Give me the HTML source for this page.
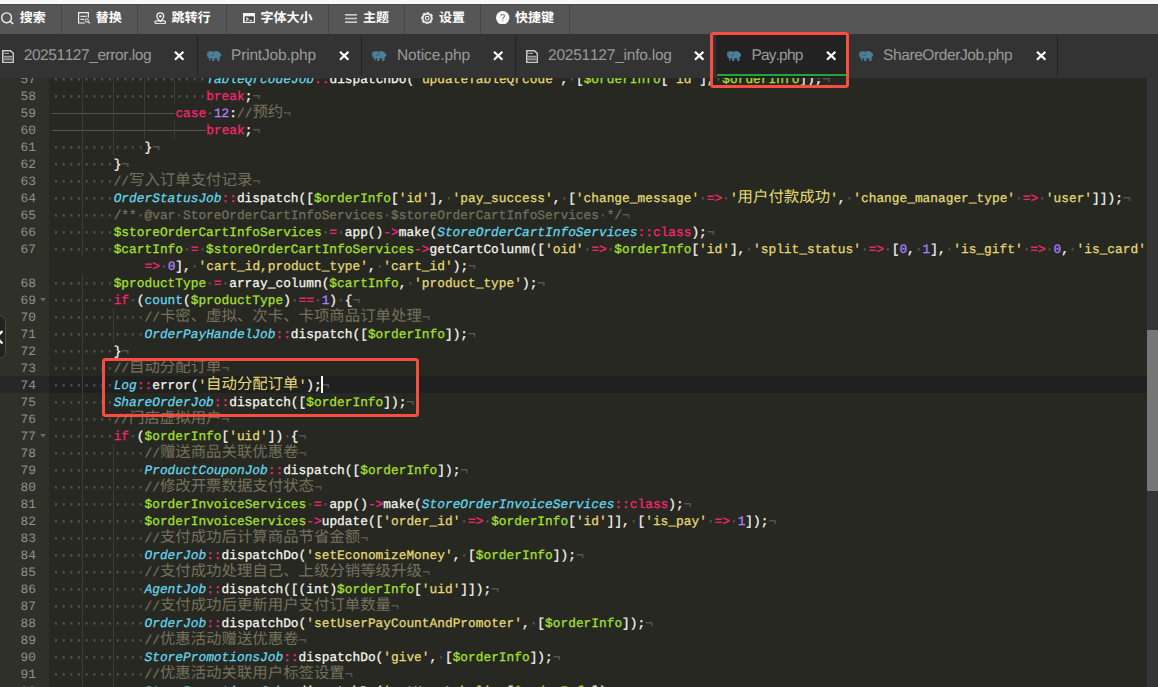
<!DOCTYPE html><html><head><meta charset="utf-8"><title>editor</title><style>
*{box-sizing:border-box}
html,body{margin:0;padding:0}
body{width:1158px;height:687px;overflow:hidden;background:#272822;position:relative;font-family:"Liberation Sans",sans-serif;text-rendering:geometricPrecision}
#top{position:absolute;left:0;top:0;width:1158px;height:4px;background:#f8f8f8}
#tb{position:absolute;left:0;top:4px;width:1158px;height:30px;background:#565656;border-top:1px solid #4c4c4c;overflow:hidden}
#tb svg{margin-top:-1px}
.tl{position:absolute;top:5.1px;height:16px;font:700 13px/16px "Liberation Sans","Noto Sans CJK SC",sans-serif;color:#fff;white-space:nowrap}
.sp{position:absolute;top:-1px;width:1px;height:30px;background:#454545}
#tabs{position:absolute;left:0;top:34px;width:1158px;height:44px;background:#333;overflow:hidden}
.ts{position:absolute;top:2px;width:1px;height:40px;background:#222}
.tt{position:absolute;top:11.6px;font-size:15.5px;line-height:20px;color:#9a9a9a;white-space:pre}
.tt b{display:inline-block;font-weight:400}
#ed{position:absolute;left:0;top:78px;width:1158px;height:609px;overflow:hidden;background:#272822}
#gut{position:absolute;left:0;top:0;width:49px;height:610px;background:#2F3129}
.ln{position:absolute;left:0;width:36px;white-space:pre;height:17px;text-align:right;font:12.85px/17px "Liberation Mono",monospace;color:#8F908A}
.row{position:absolute;left:52px;height:17px;white-space:pre;font:12.85px/17px "Liberation Mono",monospace;color:#F8F8F2;-webkit-text-stroke:0.25px}
.row b,.ln b{display:inline-block;width:7.7125px;font-weight:400;font-style:inherit}
.iv{color:#5a5a54;-webkit-text-stroke:0.3px}
.cm{color:#75715E}.st{color:#E6DB74}.va{color:#A6E22E}.cl{color:#66D9EF}.kw{color:#F92672}.nu{color:#AE81FF}.tx{color:#F8F8F2}.it{font-style:italic}
.ig{display:inline-block;width:30.85px;height:17px;vertical-align:top;background:linear-gradient(#3c3d37,#3c3d37) right top/1px 100% no-repeat;margin-top:-1px;padding-top:1px}
.tb{background:linear-gradient(#3c3d37,#3c3d37) right top/1px 100% no-repeat,linear-gradient(#55554f,#55554f) left 9px/100% 1px no-repeat}
.tb0{display:inline-block;width:30.85px;height:17px;vertical-align:top;margin-top:-1px;background:linear-gradient(#55554f,#55554f) left 9px/100% 1px no-repeat}
.cj{display:inline-block;vertical-align:top}
.cjt{height:17px;font:15.425px/17px "Liberation Mono","Noto Sans CJK SC",monospace;white-space:nowrap;-webkit-text-stroke:0;overflow:visible}
#pill{position:absolute;left:-9px;top:315px;width:15px;height:44px;border-radius:7px;background:#222;border:1px solid #4c4c4a}
.rb{position:absolute;border:3px solid #FA4C3F;border-radius:3.5px}
</style></head><body><div id="top"></div><div id="tb"><i class="sp" style="left:61px"></i><svg style="position:absolute;left:1.2px;top:7.8px" width="13" height="13" viewBox="0 0 13 13"><circle cx="5.6" cy="5.8" r="4.9" fill="none" stroke="#f0f0f0" stroke-width="1.4"/><path d="M9.1 9.3 L12.4 12" stroke="#f0f0f0" stroke-width="1.5" fill="none"/></svg><span class="tl" style="left:19.7px;width:26px">搜索</span><i class="sp" style="left:137px"></i><svg style="position:absolute;left:77.6px;top:8.3px" width="13" height="12" viewBox="0 0 13 12"><path d="M10.3 5.8V0.6H0.6V11.0H6.8" fill="none" stroke="#f0f0f0" stroke-width="1.2"/><path d="M2.4 4.3H8.6M2.4 7.4H6.4" stroke="#ddd" stroke-width="1.2"/><circle cx="8.8" cy="8.4" r="1.6" fill="none" stroke="#f0f0f0" stroke-width="1"/><path d="M10 9.7L12 11.3" stroke="#f0f0f0" stroke-width="1.1"/></svg><span class="tl" style="left:95.75px;width:26px">替换</span><i class="sp" style="left:226px"></i><svg style="position:absolute;left:153.8px;top:7.8px" width="12.6" height="12.6" viewBox="0 0 12.6 12.6"><ellipse cx="6.3" cy="10.3" rx="5.5" ry="1.55" fill="none" stroke="#f2f2f2" stroke-width="1.25"/><path d="M6.3 9.5C4.4 7.5 2.9 5.9 2.9 4.2A3.4 3.4 0 0 1 9.7 4.2C9.7 5.9 8.2 7.5 6.3 9.5Z" fill="#565656" stroke="#f2f2f2" stroke-width="1.3"/><circle cx="6.3" cy="4.2" r="1.2" fill="#f2f2f2"/></svg><span class="tl" style="left:171.6px;width:39px">跳转行</span><i class="sp" style="left:328px"></i><svg style="position:absolute;left:242.85px;top:8.95px" width="12.4" height="10.2" viewBox="0 0 12.4 10.2"><rect x="0" y="0" width="12.4" height="10.2" fill="#f4f4f4"/><rect x="1.6" y="3.3" width="9.2" height="5.5" fill="#444"/><path d="M2.9 4.6L5.2 6.1L2.9 7.7" fill="none" stroke="#f4f4f4" stroke-width="1.1"/><path d="M6.3 7.4H9.2" stroke="#f4f4f4" stroke-width="0.9"/></svg><span class="tl" style="left:260.5px;width:52px">字体大小</span><i class="sp" style="left:404px"></i><svg style="position:absolute;left:344.9px;top:9.6px" width="12" height="9" viewBox="0 0 12 9"><path d="M0 0.9H12M0 8.1H12" stroke="#f0f0f0" stroke-width="1.2"/><path d="M0 4.5H12" stroke="#c8c8c8" stroke-width="1.6"/></svg><span class="tl" style="left:363px;width:26px">主题</span><i class="sp" style="left:480px"></i><svg style="position:absolute;left:420.8px;top:7.7px" width="12.4" height="12.4" viewBox="0 0 12.4 12.4"><circle cx="6.2" cy="6.2" r="4.5" fill="none" stroke="#e4e4e4" stroke-width="2"/><circle cx="6.2" cy="6.2" r="5.6" fill="none" stroke="#e4e4e4" stroke-width="1.2" stroke-dasharray="2.4 2" stroke-dashoffset="1.2"/><circle cx="6.2" cy="6.2" r="1.8" fill="none" stroke="#f4f4f4" stroke-width="1.1"/></svg><span class="tl" style="left:438.9px;width:26px">设置</span><i class="sp" style="left:569px"></i><svg style="position:absolute;left:496.3px;top:7.1px" width="13.4" height="13.4" viewBox="0 0 13.4 13.4"><circle cx="6.7" cy="6.7" r="6.7" fill="#fafafa"/><path d="M4.9 5.3C4.9 4.1 5.7 3.5 6.7 3.5S8.5 4.1 8.5 5C8.5 6.2 6.8 6.5 6.8 8" fill="none" stroke="#777" stroke-width="1.05"/><circle cx="6.8" cy="9.3" r="0.65" fill="#777"/></svg><span class="tl" style="left:515px;width:39px">快捷键</span></div><div id="tabs"><i class="ts" style="left:197px"></i><svg style="position:absolute;left:1.6px;top:15.6px" width="12.2" height="13.4" viewBox="0 0 12.2 13.4"><path d="M0.8 0.8H8.5L11.4 3.5V12.6H0.8Z" fill="#262626" stroke="#cbcbcb" stroke-width="1.6"/><path d="M2.3 3.4H7.2" stroke="#a8a8a8" stroke-width="1.3"/><path d="M2 6.3H10.3M2 8.05H10.3M2 9.85H10.3" stroke="#dedede" stroke-width="0.85"/></svg><span class="tt" style="left:23.7px"><b style="width:8.19px">2</b><b style="width:8.19px">0</b><b style="width:8.19px">2</b><b style="width:8.19px">5</b><b style="width:8.19px">1</b><b style="width:8.19px">1</b><b style="width:8.19px">2</b><b style="width:8.19px">7</b><b style="width:8.19px">_</b><b style="width:8.19px">e</b><b style="width:4.73px">r</b><b style="width:4.73px">r</b><b style="width:8.19px">o</b><b style="width:4.73px">r</b><b style="width:3.88px">.</b><b style="width:3.01px">l</b><b style="width:8.19px">o</b><b style="width:8.19px">g</b></span><svg style="position:absolute;left:174.4px;top:17.3px" width="10.4" height="9.6" viewBox="0 0 10.4 9.6"><path d="M1 0.8L9.4 8.8M9.4 0.8L1 8.8" stroke="#fff" stroke-width="2.2"/></svg><i class="ts" style="left:361px"></i><svg style="position:absolute;left:207.2px;top:16.8px" width="14.5" height="10.3" viewBox="0 0 14.5 10.3"><path fill="#4B8098" d="M0.9 0.9C1.6 0.3 2.7 0.1 3.8 0.15C5 0.2 6 0.4 6.8 0.8C7.5 0.3 8.3 0.1 9.1 0.1C10.3 0.1 11.4 0.5 12.2 1.2C13 1.8 13.6 2.5 13.95 3.3L14.5 4.4L14.1 4.9C13.8 5.2 13.4 5.5 13.1 5.8C12.8 6.2 12.6 6.7 12.5 7.2L12.4 10.2H10.2V7.5C9.3 7.4 8.3 7.3 7.35 7.2V10.2H5.25L5.05 7.2H3.5V9.4H2.3L2.1 7.2L0.9 6.5C0.4 5.9 0.15 5.1 0.15 4.4V2.3C0.2 1.7 0.5 1.2 0.9 0.9Z"/><path d="M6.8 0.8C6.9 2 6.8 3.4 6.3 4.4C5.5 4.6 4.6 4.6 3.8 4.5" fill="none" stroke="#2b4a5a" stroke-width="0.5"/><circle cx="1.8" cy="3.6" r="0.45" fill="#2b3a44"/><circle cx="1.8" cy="5.6" r="0.45" fill="#2b3a44"/></svg><span class="tt" style="left:231px"><b style="width:10.17px">P</b><b style="width:4.99px">r</b><b style="width:3.27px">i</b><b style="width:8.45px">n</b><b style="width:4.14px">t</b><b style="width:7.58px">J</b><b style="width:8.45px">o</b><b style="width:8.45px">b</b><b style="width:4.14px">.</b><b style="width:8.45px">p</b><b style="width:8.45px">h</b><b style="width:8.45px">p</b></span><svg style="position:absolute;left:338.6px;top:17.3px" width="10.4" height="9.6" viewBox="0 0 10.4 9.6"><path d="M1 0.8L9.4 8.8M9.4 0.8L1 8.8" stroke="#fff" stroke-width="2.2"/></svg><i class="ts" style="left:515px"></i><svg style="position:absolute;left:372.1px;top:16.8px" width="14.5" height="10.3" viewBox="0 0 14.5 10.3"><path fill="#4B8098" d="M0.9 0.9C1.6 0.3 2.7 0.1 3.8 0.15C5 0.2 6 0.4 6.8 0.8C7.5 0.3 8.3 0.1 9.1 0.1C10.3 0.1 11.4 0.5 12.2 1.2C13 1.8 13.6 2.5 13.95 3.3L14.5 4.4L14.1 4.9C13.8 5.2 13.4 5.5 13.1 5.8C12.8 6.2 12.6 6.7 12.5 7.2L12.4 10.2H10.2V7.5C9.3 7.4 8.3 7.3 7.35 7.2V10.2H5.25L5.05 7.2H3.5V9.4H2.3L2.1 7.2L0.9 6.5C0.4 5.9 0.15 5.1 0.15 4.4V2.3C0.2 1.7 0.5 1.2 0.9 0.9Z"/><path d="M6.8 0.8C6.9 2 6.8 3.4 6.3 4.4C5.5 4.6 4.6 4.6 3.8 4.5" fill="none" stroke="#2b4a5a" stroke-width="0.5"/><circle cx="1.8" cy="3.6" r="0.45" fill="#2b3a44"/><circle cx="1.8" cy="5.6" r="0.45" fill="#2b3a44"/></svg><span class="tt" style="left:397px"><b style="width:11.08px">N</b><b style="width:8.51px">o</b><b style="width:4.20px">t</b><b style="width:3.33px">i</b><b style="width:7.64px">c</b><b style="width:8.51px">e</b><b style="width:4.20px">.</b><b style="width:8.51px">p</b><b style="width:8.51px">h</b><b style="width:8.51px">p</b></span><svg style="position:absolute;left:493.4px;top:17.3px" width="10.4" height="9.6" viewBox="0 0 10.4 9.6"><path d="M1 0.8L9.4 8.8M9.4 0.8L1 8.8" stroke="#fff" stroke-width="2.2"/></svg><i class="ts" style="left:716px"></i><svg style="position:absolute;left:525.95px;top:15.6px" width="12.2" height="13.4" viewBox="0 0 12.2 13.4"><path d="M0.8 0.8H8.5L11.4 3.5V12.6H0.8Z" fill="#262626" stroke="#cbcbcb" stroke-width="1.6"/><path d="M2.3 3.4H7.2" stroke="#a8a8a8" stroke-width="1.3"/><path d="M2 6.3H10.3M2 8.05H10.3M2 9.85H10.3" stroke="#dedede" stroke-width="0.85"/></svg><span class="tt" style="left:548px"><b style="width:8.40px">2</b><b style="width:8.40px">0</b><b style="width:8.40px">2</b><b style="width:8.40px">5</b><b style="width:8.40px">1</b><b style="width:8.40px">1</b><b style="width:8.40px">2</b><b style="width:8.40px">7</b><b style="width:8.40px">_</b><b style="width:3.22px">i</b><b style="width:8.40px">n</b><b style="width:4.09px">f</b><b style="width:8.40px">o</b><b style="width:4.09px">.</b><b style="width:3.22px">l</b><b style="width:8.40px">o</b><b style="width:8.40px">g</b></span><svg style="position:absolute;left:693.6px;top:17.3px" width="10.4" height="9.6" viewBox="0 0 10.4 9.6"><path d="M1 0.8L9.4 8.8M9.4 0.8L1 8.8" stroke="#fff" stroke-width="2.2"/></svg><div style="position:absolute;left:717px;top:0;width:131px;height:44px;background:#222"></div><div style="position:absolute;left:717px;top:40px;width:131px;height:2px;background:#20A53A"></div><i class="ts" style="left:848px"></i><svg style="position:absolute;left:726.7px;top:16.8px" width="14.5" height="10.3" viewBox="0 0 14.5 10.3"><path fill="#4B8098" d="M0.9 0.9C1.6 0.3 2.7 0.1 3.8 0.15C5 0.2 6 0.4 6.8 0.8C7.5 0.3 8.3 0.1 9.1 0.1C10.3 0.1 11.4 0.5 12.2 1.2C13 1.8 13.6 2.5 13.95 3.3L14.5 4.4L14.1 4.9C13.8 5.2 13.4 5.5 13.1 5.8C12.8 6.2 12.6 6.7 12.5 7.2L12.4 10.2H10.2V7.5C9.3 7.4 8.3 7.3 7.35 7.2V10.2H5.25L5.05 7.2H3.5V9.4H2.3L2.1 7.2L0.9 6.5C0.4 5.9 0.15 5.1 0.15 4.4V2.3C0.2 1.7 0.5 1.2 0.9 0.9Z"/><path d="M6.8 0.8C6.9 2 6.8 3.4 6.3 4.4C5.5 4.6 4.6 4.6 3.8 4.5" fill="none" stroke="#2b4a5a" stroke-width="0.5"/><circle cx="1.8" cy="3.6" r="0.45" fill="#2b3a44"/><circle cx="1.8" cy="5.6" r="0.45" fill="#2b3a44"/></svg><span class="tt" style="left:751.4px"><b style="width:9.52px">P</b><b style="width:7.80px">a</b><b style="width:6.93px">y</b><b style="width:3.49px">.</b><b style="width:7.80px">p</b><b style="width:7.80px">h</b><b style="width:7.80px">p</b></span><svg style="position:absolute;left:826px;top:17.3px" width="10.4" height="9.6" viewBox="0 0 10.4 9.6"><path d="M1 0.8L9.4 8.8M9.4 0.8L1 8.8" stroke="#fff" stroke-width="2.2"/></svg><i class="ts" style="left:1057px"></i><svg style="position:absolute;left:858.7px;top:16.8px" width="14.5" height="10.3" viewBox="0 0 14.5 10.3"><path fill="#4B8098" d="M0.9 0.9C1.6 0.3 2.7 0.1 3.8 0.15C5 0.2 6 0.4 6.8 0.8C7.5 0.3 8.3 0.1 9.1 0.1C10.3 0.1 11.4 0.5 12.2 1.2C13 1.8 13.6 2.5 13.95 3.3L14.5 4.4L14.1 4.9C13.8 5.2 13.4 5.5 13.1 5.8C12.8 6.2 12.6 6.7 12.5 7.2L12.4 10.2H10.2V7.5C9.3 7.4 8.3 7.3 7.35 7.2V10.2H5.25L5.05 7.2H3.5V9.4H2.3L2.1 7.2L0.9 6.5C0.4 5.9 0.15 5.1 0.15 4.4V2.3C0.2 1.7 0.5 1.2 0.9 0.9Z"/><path d="M6.8 0.8C6.9 2 6.8 3.4 6.3 4.4C5.5 4.6 4.6 4.6 3.8 4.5" fill="none" stroke="#2b4a5a" stroke-width="0.5"/><circle cx="1.8" cy="3.6" r="0.45" fill="#2b3a44"/><circle cx="1.8" cy="5.6" r="0.45" fill="#2b3a44"/></svg><span class="tt" style="left:883px"><b style="width:9.94px">S</b><b style="width:8.22px">h</b><b style="width:8.22px">a</b><b style="width:4.76px">r</b><b style="width:8.22px">e</b><b style="width:11.66px">O</b><b style="width:4.76px">r</b><b style="width:8.22px">d</b><b style="width:8.22px">e</b><b style="width:4.76px">r</b><b style="width:7.35px">J</b><b style="width:8.22px">o</b><b style="width:8.22px">b</b><b style="width:3.91px">.</b><b style="width:8.22px">p</b><b style="width:8.22px">h</b><b style="width:8.22px">p</b></span><svg style="position:absolute;left:1035.5px;top:17.3px" width="10.4" height="9.6" viewBox="0 0 10.4 9.6"><path d="M1 0.8L9.4 8.8M9.4 0.8L1 8.8" stroke="#fff" stroke-width="2.2"/></svg></div><div id="ed"><div id="gut"></div><div style="position:absolute;left:49px;top:298px;width:1098px;height:17px;background:#202020"></div><div style="position:absolute;left:0;top:298px;width:49px;height:17px;background:#272727"></div><div class="ln" style="top:-7px"><b>5</b><b>7</b></div><div class="row" style="top:-7px"><span class="ig iv"><b>·</b><b>·</b><b>·</b><b>·</b></span><span class="ig iv"><b>·</b><b>·</b><b>·</b><b>·</b></span><span class="ig iv"><b>·</b><b>·</b><b>·</b><b>·</b></span><span class="ig iv"><b>·</b><b>·</b><b>·</b><b>·</b></span><span class="iv"><b>·</b><b>·</b><b>·</b><b>·</b></span><span class="cl it"><b>T</b><b>a</b><b>b</b><b>l</b><b>e</b><b>Q</b><b>r</b><b>c</b><b>o</b><b>d</b><b>e</b><b>J</b><b>o</b><b>b</b></span><span class="kw"><b>:</b><b>:</b></span><span class="tx"><b>d</b><b>i</b><b>s</b><b>p</b><b>a</b><b>t</b><b>c</b><b>h</b><b>D</b><b>o</b></span><span class="tx"><b>(</b></span><span class="st"><b>&#x27;</b><b>u</b><b>p</b><b>d</b><b>a</b><b>t</b><b>e</b><b>T</b><b>a</b><b>b</b><b>l</b><b>e</b><b>Q</b><b>r</b><b>c</b><b>o</b><b>d</b><b>e</b><b>&#x27;</b></span><span class="tx"><b>,</b></span><span class="iv"><b>·</b></span><span class="tx"><b>[</b></span><span class="va"><b>$</b><b>o</b><b>r</b><b>d</b><b>e</b><b>r</b><b>I</b><b>n</b><b>f</b><b>o</b></span><span class="tx"><b>[</b></span><span class="st"><b>&#x27;</b><b>i</b><b>d</b><b>&#x27;</b></span><span class="tx"><b>]</b></span><span class="tx"><b>,</b></span><span class="iv"><b>·</b></span><span class="va"><b>$</b><b>o</b><b>r</b><b>d</b><b>e</b><b>r</b><b>I</b><b>n</b><b>f</b><b>o</b></span><span class="tx"><b>]</b></span><span class="tx"><b>)</b></span><span class="tx"><b>;</b></span><span class="iv"><b>¬</b></span></div><div class="ln" style="top:10px"><b>5</b><b>8</b></div><div class="row" style="top:10px"><span class="ig iv"><b>·</b><b>·</b><b>·</b><b>·</b></span><span class="ig iv"><b>·</b><b>·</b><b>·</b><b>·</b></span><span class="ig iv"><b>·</b><b>·</b><b>·</b><b>·</b></span><span class="ig iv"><b>·</b><b>·</b><b>·</b><b>·</b></span><span class="iv"><b>·</b><b>·</b><b>·</b><b>·</b></span><span class="kw"><b>b</b><b>r</b><b>e</b><b>a</b><b>k</b></span><span class="tx"><b>;</b></span><span class="iv"><b>¬</b></span></div><div class="ln" style="top:27px"><b>5</b><b>9</b></div><div class="row" style="top:27px"><span class="ig tb"></span><span class="ig tb"></span><span class="ig tb"></span><span class="tb0"></span><span class="kw"><b>c</b><b>a</b><b>s</b><b>e</b></span><span class="iv"><b>·</b></span><span class="nu"><b>1</b><b>2</b></span><span class="tx"><b>:</b></span><span class="cm"><b>/</b><b>/</b></span><span class="cj cjt cm" style="width:30.85px">预约</span><span class="iv"><b>¬</b></span></div><div class="ln" style="top:44px"><b>6</b><b>0</b></div><div class="row" style="top:44px"><span class="ig tb"></span><span class="ig tb"></span><span class="ig tb"></span><span class="ig tb"></span><span class="tb0"></span><span class="kw"><b>b</b><b>r</b><b>e</b><b>a</b><b>k</b></span><span class="tx"><b>;</b></span><span class="iv"><b>¬</b></span></div><div class="ln" style="top:61px"><b>6</b><b>1</b></div><div class="row" style="top:61px"><span class="ig iv"><b>·</b><b>·</b><b>·</b><b>·</b></span><span class="ig iv"><b>·</b><b>·</b><b>·</b><b>·</b></span><span class="iv"><b>·</b><b>·</b><b>·</b><b>·</b></span><span class="tx"><b>}</b></span><span class="iv"><b>¬</b></span></div><div class="ln" style="top:78px"><b>6</b><b>2</b></div><div class="row" style="top:78px"><span class="ig iv"><b>·</b><b>·</b><b>·</b><b>·</b></span><span class="iv"><b>·</b><b>·</b><b>·</b><b>·</b></span><span class="tx"><b>}</b></span><span class="iv"><b>¬</b></span></div><div class="ln" style="top:95px"><b>6</b><b>3</b></div><div class="row" style="top:95px"><span class="ig iv"><b>·</b><b>·</b><b>·</b><b>·</b></span><span class="iv"><b>·</b><b>·</b><b>·</b><b>·</b></span><span class="cm"><b>/</b><b>/</b></span><span class="cj cjt cm" style="width:123.40px">写入订单支付记录</span><span class="iv"><b>¬</b></span></div><div class="ln" style="top:112px"><b>6</b><b>4</b></div><div class="row" style="top:112px"><span class="ig iv"><b>·</b><b>·</b><b>·</b><b>·</b></span><span class="iv"><b>·</b><b>·</b><b>·</b><b>·</b></span><span class="cl it"><b>O</b><b>r</b><b>d</b><b>e</b><b>r</b><b>S</b><b>t</b><b>a</b><b>t</b><b>u</b><b>s</b><b>J</b><b>o</b><b>b</b></span><span class="kw"><b>:</b><b>:</b></span><span class="tx"><b>d</b><b>i</b><b>s</b><b>p</b><b>a</b><b>t</b><b>c</b><b>h</b></span><span class="tx"><b>(</b></span><span class="tx"><b>[</b></span><span class="va"><b>$</b><b>o</b><b>r</b><b>d</b><b>e</b><b>r</b><b>I</b><b>n</b><b>f</b><b>o</b></span><span class="tx"><b>[</b></span><span class="st"><b>&#x27;</b><b>i</b><b>d</b><b>&#x27;</b></span><span class="tx"><b>]</b></span><span class="tx"><b>,</b></span><span class="iv"><b>·</b></span><span class="st"><b>&#x27;</b><b>p</b><b>a</b><b>y</b><b>_</b><b>s</b><b>u</b><b>c</b><b>c</b><b>e</b><b>s</b><b>s</b><b>&#x27;</b></span><span class="tx"><b>,</b></span><span class="iv"><b>·</b></span><span class="tx"><b>[</b></span><span class="st"><b>&#x27;</b><b>c</b><b>h</b><b>a</b><b>n</b><b>g</b><b>e</b><b>_</b><b>m</b><b>e</b><b>s</b><b>s</b><b>a</b><b>g</b><b>e</b><b>&#x27;</b></span><span class="iv"><b>·</b></span><span class="kw"><b>=</b><b>&gt;</b></span><span class="iv"><b>·</b></span><span class="st"><b>&#x27;</b></span><span class="cj cjt st" style="width:92.55px">用户付款成功</span><span class="st"><b>&#x27;</b></span><span class="tx"><b>,</b></span><span class="iv"><b>·</b></span><span class="st"><b>&#x27;</b><b>c</b><b>h</b><b>a</b><b>n</b><b>g</b><b>e</b><b>_</b><b>m</b><b>a</b><b>n</b><b>a</b><b>g</b><b>e</b><b>r</b><b>_</b><b>t</b><b>y</b><b>p</b><b>e</b><b>&#x27;</b></span><span class="iv"><b>·</b></span><span class="kw"><b>=</b><b>&gt;</b></span><span class="iv"><b>·</b></span><span class="st"><b>&#x27;</b><b>u</b><b>s</b><b>e</b><b>r</b><b>&#x27;</b></span><span class="tx"><b>]</b></span><span class="tx"><b>]</b></span><span class="tx"><b>)</b></span><span class="tx"><b>;</b></span><span class="iv"><b>¬</b></span></div><div class="ln" style="top:129px"><b>6</b><b>5</b></div><div class="row" style="top:129px"><span class="ig iv"><b>·</b><b>·</b><b>·</b><b>·</b></span><span class="iv"><b>·</b><b>·</b><b>·</b><b>·</b></span><span class="cm"><b>/</b><b>*</b><b>*</b></span><span class="iv"><b>·</b></span><span class="cm"><b>@</b><b>v</b><b>a</b><b>r</b></span><span class="iv"><b>·</b></span><span class="cm"><b>S</b><b>t</b><b>o</b><b>r</b><b>e</b><b>O</b><b>r</b><b>d</b><b>e</b><b>r</b><b>C</b><b>a</b><b>r</b><b>t</b><b>I</b><b>n</b><b>f</b><b>o</b><b>S</b><b>e</b><b>r</b><b>v</b><b>i</b><b>c</b><b>e</b><b>s</b></span><span class="iv"><b>·</b></span><span class="cm"><b>$</b><b>s</b><b>t</b><b>o</b><b>r</b><b>e</b><b>O</b><b>r</b><b>d</b><b>e</b><b>r</b><b>C</b><b>a</b><b>r</b><b>t</b><b>I</b><b>n</b><b>f</b><b>o</b><b>S</b><b>e</b><b>r</b><b>v</b><b>i</b><b>c</b><b>e</b><b>s</b></span><span class="iv"><b>·</b></span><span class="cm"><b>*</b><b>/</b></span><span class="iv"><b>¬</b></span></div><div class="ln" style="top:146px"><b>6</b><b>6</b></div><div class="row" style="top:146px"><span class="ig iv"><b>·</b><b>·</b><b>·</b><b>·</b></span><span class="iv"><b>·</b><b>·</b><b>·</b><b>·</b></span><span class="va"><b>$</b><b>s</b><b>t</b><b>o</b><b>r</b><b>e</b><b>O</b><b>r</b><b>d</b><b>e</b><b>r</b><b>C</b><b>a</b><b>r</b><b>t</b><b>I</b><b>n</b><b>f</b><b>o</b><b>S</b><b>e</b><b>r</b><b>v</b><b>i</b><b>c</b><b>e</b><b>s</b></span><span class="iv"><b>·</b></span><span class="kw"><b>=</b></span><span class="iv"><b>·</b></span><span class="tx"><b>a</b><b>p</b><b>p</b></span><span class="tx"><b>(</b></span><span class="tx"><b>)</b></span><span class="kw"><b>-</b><b>&gt;</b></span><span class="tx"><b>m</b><b>a</b><b>k</b><b>e</b></span><span class="tx"><b>(</b></span><span class="cl it"><b>S</b><b>t</b><b>o</b><b>r</b><b>e</b><b>O</b><b>r</b><b>d</b><b>e</b><b>r</b><b>C</b><b>a</b><b>r</b><b>t</b><b>I</b><b>n</b><b>f</b><b>o</b><b>S</b><b>e</b><b>r</b><b>v</b><b>i</b><b>c</b><b>e</b><b>s</b></span><span class="kw"><b>:</b><b>:</b></span><span class="kw"><b>c</b><b>l</b><b>a</b><b>s</b><b>s</b></span><span class="tx"><b>)</b></span><span class="tx"><b>;</b></span><span class="iv"><b>¬</b></span></div><div class="ln" style="top:163px"><b>6</b><b>7</b></div><div class="row" style="top:163px"><span class="ig iv"><b>·</b><b>·</b><b>·</b><b>·</b></span><span class="iv"><b>·</b><b>·</b><b>·</b><b>·</b></span><span class="va"><b>$</b><b>c</b><b>a</b><b>r</b><b>t</b><b>I</b><b>n</b><b>f</b><b>o</b></span><span class="iv"><b>·</b></span><span class="kw"><b>=</b></span><span class="iv"><b>·</b></span><span class="va"><b>$</b><b>s</b><b>t</b><b>o</b><b>r</b><b>e</b><b>O</b><b>r</b><b>d</b><b>e</b><b>r</b><b>C</b><b>a</b><b>r</b><b>t</b><b>I</b><b>n</b><b>f</b><b>o</b><b>S</b><b>e</b><b>r</b><b>v</b><b>i</b><b>c</b><b>e</b><b>s</b></span><span class="kw"><b>-</b><b>&gt;</b></span><span class="tx"><b>g</b><b>e</b><b>t</b><b>C</b><b>a</b><b>r</b><b>t</b><b>C</b><b>o</b><b>l</b><b>u</b><b>n</b><b>m</b></span><span class="tx"><b>(</b></span><span class="tx"><b>[</b></span><span class="st"><b>&#x27;</b><b>o</b><b>i</b><b>d</b><b>&#x27;</b></span><span class="iv"><b>·</b></span><span class="kw"><b>=</b><b>&gt;</b></span><span class="iv"><b>·</b></span><span class="va"><b>$</b><b>o</b><b>r</b><b>d</b><b>e</b><b>r</b><b>I</b><b>n</b><b>f</b><b>o</b></span><span class="tx"><b>[</b></span><span class="st"><b>&#x27;</b><b>i</b><b>d</b><b>&#x27;</b></span><span class="tx"><b>]</b></span><span class="tx"><b>,</b></span><span class="iv"><b>·</b></span><span class="st"><b>&#x27;</b><b>s</b><b>p</b><b>l</b><b>i</b><b>t</b><b>_</b><b>s</b><b>t</b><b>a</b><b>t</b><b>u</b><b>s</b><b>&#x27;</b></span><span class="iv"><b>·</b></span><span class="kw"><b>=</b><b>&gt;</b></span><span class="iv"><b>·</b></span><span class="tx"><b>[</b></span><span class="nu"><b>0</b></span><span class="tx"><b>,</b></span><span class="iv"><b>·</b></span><span class="nu"><b>1</b></span><span class="tx"><b>]</b></span><span class="tx"><b>,</b></span><span class="iv"><b>·</b></span><span class="st"><b>&#x27;</b><b>i</b><b>s</b><b>_</b><b>g</b><b>i</b><b>f</b><b>t</b><b>&#x27;</b></span><span class="iv"><b>·</b></span><span class="kw"><b>=</b><b>&gt;</b></span><span class="iv"><b>·</b></span><span class="nu"><b>0</b></span><span class="tx"><b>,</b></span><span class="iv"><b>·</b></span><span class="st"><b>&#x27;</b><b>i</b><b>s</b><b>_</b><b>c</b><b>a</b><b>r</b><b>d</b><b>&#x27;</b></span></div><div class="row" style="top:180px"><span style="display:inline-block;width:92.55px"></span><span class="kw"><b>=</b><b>&gt;</b></span><span class="iv"><b>·</b></span><span class="nu"><b>0</b></span><span class="tx"><b>]</b></span><span class="tx"><b>,</b></span><span class="iv"><b>·</b></span><span class="st"><b>&#x27;</b><b>c</b><b>a</b><b>r</b><b>t</b><b>_</b><b>i</b><b>d</b><b>,</b><b>p</b><b>r</b><b>o</b><b>d</b><b>u</b><b>c</b><b>t</b><b>_</b><b>t</b><b>y</b><b>p</b><b>e</b><b>&#x27;</b></span><span class="tx"><b>,</b></span><span class="iv"><b>·</b></span><span class="st"><b>&#x27;</b><b>c</b><b>a</b><b>r</b><b>t</b><b>_</b><b>i</b><b>d</b><b>&#x27;</b></span><span class="tx"><b>)</b></span><span class="tx"><b>;</b></span><span class="iv"><b>¬</b></span></div><div class="ln" style="top:197px"><b>6</b><b>8</b></div><div class="row" style="top:197px"><span class="ig iv"><b>·</b><b>·</b><b>·</b><b>·</b></span><span class="iv"><b>·</b><b>·</b><b>·</b><b>·</b></span><span class="va"><b>$</b><b>p</b><b>r</b><b>o</b><b>d</b><b>u</b><b>c</b><b>t</b><b>T</b><b>y</b><b>p</b><b>e</b></span><span class="iv"><b>·</b></span><span class="kw"><b>=</b></span><span class="iv"><b>·</b></span><span class="tx"><b>a</b><b>r</b><b>r</b><b>a</b><b>y</b><b>_</b><b>c</b><b>o</b><b>l</b><b>u</b><b>m</b><b>n</b></span><span class="tx"><b>(</b></span><span class="va"><b>$</b><b>c</b><b>a</b><b>r</b><b>t</b><b>I</b><b>n</b><b>f</b><b>o</b></span><span class="tx"><b>,</b></span><span class="iv"><b>·</b></span><span class="st"><b>&#x27;</b><b>p</b><b>r</b><b>o</b><b>d</b><b>u</b><b>c</b><b>t</b><b>_</b><b>t</b><b>y</b><b>p</b><b>e</b><b>&#x27;</b></span><span class="tx"><b>)</b></span><span class="tx"><b>;</b></span><span class="iv"><b>¬</b></span></div><div class="ln" style="top:214px"><b>6</b><b>9</b></div><svg style="position:absolute;left:40px;top:220px" width="6" height="4" viewBox="0 0 6 4"><path d="M0 0H6L3 3.6Z" fill="#6b6c66"/></svg><div class="row" style="top:214px"><span class="ig iv"><b>·</b><b>·</b><b>·</b><b>·</b></span><span class="iv"><b>·</b><b>·</b><b>·</b><b>·</b></span><span class="kw"><b>i</b><b>f</b></span><span class="iv"><b>·</b></span><span class="tx"><b>(</b></span><span class="cl"><b>c</b><b>o</b><b>u</b><b>n</b><b>t</b></span><span class="tx"><b>(</b></span><span class="va"><b>$</b><b>p</b><b>r</b><b>o</b><b>d</b><b>u</b><b>c</b><b>t</b><b>T</b><b>y</b><b>p</b><b>e</b></span><span class="tx"><b>)</b></span><span class="iv"><b>·</b></span><span class="kw"><b>=</b><b>=</b></span><span class="iv"><b>·</b></span><span class="nu"><b>1</b></span><span class="tx"><b>)</b></span><span class="iv"><b>·</b></span><span class="tx"><b>{</b></span><span class="iv"><b>¬</b></span></div><div class="ln" style="top:231px"><b>7</b><b>0</b></div><div class="row" style="top:231px"><span class="ig iv"><b>·</b><b>·</b><b>·</b><b>·</b></span><span class="ig iv"><b>·</b><b>·</b><b>·</b><b>·</b></span><span class="iv"><b>·</b><b>·</b><b>·</b><b>·</b></span><span class="cm"><b>/</b><b>/</b></span><span class="cj cjt cm" style="width:262.23px">卡密、虚拟、次卡、卡项商品订单处理</span><span class="iv"><b>¬</b></span></div><div class="ln" style="top:248px"><b>7</b><b>1</b></div><div class="row" style="top:248px"><span class="ig iv"><b>·</b><b>·</b><b>·</b><b>·</b></span><span class="ig iv"><b>·</b><b>·</b><b>·</b><b>·</b></span><span class="iv"><b>·</b><b>·</b><b>·</b><b>·</b></span><span class="cl it"><b>O</b><b>r</b><b>d</b><b>e</b><b>r</b><b>P</b><b>a</b><b>y</b><b>H</b><b>a</b><b>n</b><b>d</b><b>e</b><b>l</b><b>J</b><b>o</b><b>b</b></span><span class="kw"><b>:</b><b>:</b></span><span class="tx"><b>d</b><b>i</b><b>s</b><b>p</b><b>a</b><b>t</b><b>c</b><b>h</b></span><span class="tx"><b>(</b></span><span class="tx"><b>[</b></span><span class="va"><b>$</b><b>o</b><b>r</b><b>d</b><b>e</b><b>r</b><b>I</b><b>n</b><b>f</b><b>o</b></span><span class="tx"><b>]</b></span><span class="tx"><b>)</b></span><span class="tx"><b>;</b></span><span class="iv"><b>¬</b></span></div><div class="ln" style="top:265px"><b>7</b><b>2</b></div><div class="row" style="top:265px"><span class="ig iv"><b>·</b><b>·</b><b>·</b><b>·</b></span><span class="iv"><b>·</b><b>·</b><b>·</b><b>·</b></span><span class="tx"><b>}</b></span><span class="iv"><b>¬</b></span></div><div class="ln" style="top:282px"><b>7</b><b>3</b></div><div class="row" style="top:282px"><span class="ig iv"><b>·</b><b>·</b><b>·</b><b>·</b></span><span class="iv"><b>·</b><b>·</b><b>·</b><b>·</b></span><span class="cm"><b>/</b><b>/</b></span><span class="cj cjt cm" style="width:92.55px">自动分配订单</span><span class="iv"><b>¬</b></span></div><div class="ln" style="top:299px"><b>7</b><b>4</b></div><div class="row" style="top:299px"><span class="ig iv"><b>·</b><b>·</b><b>·</b><b>·</b></span><span class="iv"><b>·</b><b>·</b><b>·</b><b>·</b></span><span class="cl it"><b>L</b><b>o</b><b>g</b></span><span class="kw"><b>:</b><b>:</b></span><span class="tx"><b>e</b><b>r</b><b>r</b><b>o</b><b>r</b></span><span class="tx"><b>(</b></span><span class="st"><b>&#x27;</b></span><span class="cj cjt st" style="width:92.55px">自动分配订单</span><span class="st"><b>&#x27;</b></span><span class="tx"><b>)</b></span><span class="tx"><b>;</b></span><span class="iv"><b>¬</b></span></div><div class="ln" style="top:316px"><b>7</b><b>5</b></div><div class="row" style="top:316px"><span class="ig iv"><b>·</b><b>·</b><b>·</b><b>·</b></span><span class="iv"><b>·</b><b>·</b><b>·</b><b>·</b></span><span class="cl it"><b>S</b><b>h</b><b>a</b><b>r</b><b>e</b><b>O</b><b>r</b><b>d</b><b>e</b><b>r</b><b>J</b><b>o</b><b>b</b></span><span class="kw"><b>:</b><b>:</b></span><span class="tx"><b>d</b><b>i</b><b>s</b><b>p</b><b>a</b><b>t</b><b>c</b><b>h</b></span><span class="tx"><b>(</b></span><span class="tx"><b>[</b></span><span class="va"><b>$</b><b>o</b><b>r</b><b>d</b><b>e</b><b>r</b><b>I</b><b>n</b><b>f</b><b>o</b></span><span class="tx"><b>]</b></span><span class="tx"><b>)</b></span><span class="tx"><b>;</b></span><span class="iv"><b>¬</b></span></div><div class="ln" style="top:333px"><b>7</b><b>6</b></div><div class="row" style="top:333px"><span class="ig iv"><b>·</b><b>·</b><b>·</b><b>·</b></span><span class="iv"><b>·</b><b>·</b><b>·</b><b>·</b></span><span class="cm"><b>/</b><b>/</b></span><span class="cj cjt cm" style="width:92.55px">门店虚拟用户</span><span class="iv"><b>¬</b></span></div><div class="ln" style="top:350px"><b>7</b><b>7</b></div><svg style="position:absolute;left:40px;top:356px" width="6" height="4" viewBox="0 0 6 4"><path d="M0 0H6L3 3.6Z" fill="#6b6c66"/></svg><div class="row" style="top:350px"><span class="ig iv"><b>·</b><b>·</b><b>·</b><b>·</b></span><span class="iv"><b>·</b><b>·</b><b>·</b><b>·</b></span><span class="kw"><b>i</b><b>f</b></span><span class="iv"><b>·</b></span><span class="tx"><b>(</b></span><span class="va"><b>$</b><b>o</b><b>r</b><b>d</b><b>e</b><b>r</b><b>I</b><b>n</b><b>f</b><b>o</b></span><span class="tx"><b>[</b></span><span class="st"><b>&#x27;</b><b>u</b><b>i</b><b>d</b><b>&#x27;</b></span><span class="tx"><b>]</b></span><span class="tx"><b>)</b></span><span class="iv"><b>·</b></span><span class="tx"><b>{</b></span><span class="iv"><b>¬</b></span></div><div class="ln" style="top:367px"><b>7</b><b>8</b></div><div class="row" style="top:367px"><span class="ig iv"><b>·</b><b>·</b><b>·</b><b>·</b></span><span class="ig iv"><b>·</b><b>·</b><b>·</b><b>·</b></span><span class="iv"><b>·</b><b>·</b><b>·</b><b>·</b></span><span class="cm"><b>/</b><b>/</b></span><span class="cj cjt cm" style="width:138.82px">赠送商品关联优惠卷</span><span class="iv"><b>¬</b></span></div><div class="ln" style="top:384px"><b>7</b><b>9</b></div><div class="row" style="top:384px"><span class="ig iv"><b>·</b><b>·</b><b>·</b><b>·</b></span><span class="ig iv"><b>·</b><b>·</b><b>·</b><b>·</b></span><span class="iv"><b>·</b><b>·</b><b>·</b><b>·</b></span><span class="cl it"><b>P</b><b>r</b><b>o</b><b>d</b><b>u</b><b>c</b><b>t</b><b>C</b><b>o</b><b>u</b><b>p</b><b>o</b><b>n</b><b>J</b><b>o</b><b>b</b></span><span class="kw"><b>:</b><b>:</b></span><span class="tx"><b>d</b><b>i</b><b>s</b><b>p</b><b>a</b><b>t</b><b>c</b><b>h</b></span><span class="tx"><b>(</b></span><span class="tx"><b>[</b></span><span class="va"><b>$</b><b>o</b><b>r</b><b>d</b><b>e</b><b>r</b><b>I</b><b>n</b><b>f</b><b>o</b></span><span class="tx"><b>]</b></span><span class="tx"><b>)</b></span><span class="tx"><b>;</b></span><span class="iv"><b>¬</b></span></div><div class="ln" style="top:401px"><b>8</b><b>0</b></div><div class="row" style="top:401px"><span class="ig iv"><b>·</b><b>·</b><b>·</b><b>·</b></span><span class="ig iv"><b>·</b><b>·</b><b>·</b><b>·</b></span><span class="iv"><b>·</b><b>·</b><b>·</b><b>·</b></span><span class="cm"><b>/</b><b>/</b></span><span class="cj cjt cm" style="width:154.25px">修改开票数据支付状态</span><span class="iv"><b>¬</b></span></div><div class="ln" style="top:418px"><b>8</b><b>1</b></div><div class="row" style="top:418px"><span class="ig iv"><b>·</b><b>·</b><b>·</b><b>·</b></span><span class="ig iv"><b>·</b><b>·</b><b>·</b><b>·</b></span><span class="iv"><b>·</b><b>·</b><b>·</b><b>·</b></span><span class="va"><b>$</b><b>o</b><b>r</b><b>d</b><b>e</b><b>r</b><b>I</b><b>n</b><b>v</b><b>o</b><b>i</b><b>c</b><b>e</b><b>S</b><b>e</b><b>r</b><b>v</b><b>i</b><b>c</b><b>e</b><b>s</b></span><span class="iv"><b>·</b></span><span class="kw"><b>=</b></span><span class="iv"><b>·</b></span><span class="tx"><b>a</b><b>p</b><b>p</b></span><span class="tx"><b>(</b></span><span class="tx"><b>)</b></span><span class="kw"><b>-</b><b>&gt;</b></span><span class="tx"><b>m</b><b>a</b><b>k</b><b>e</b></span><span class="tx"><b>(</b></span><span class="cl it"><b>S</b><b>t</b><b>o</b><b>r</b><b>e</b><b>O</b><b>r</b><b>d</b><b>e</b><b>r</b><b>I</b><b>n</b><b>v</b><b>o</b><b>i</b><b>c</b><b>e</b><b>S</b><b>e</b><b>r</b><b>v</b><b>i</b><b>c</b><b>e</b><b>s</b></span><span class="kw"><b>:</b><b>:</b></span><span class="kw"><b>c</b><b>l</b><b>a</b><b>s</b><b>s</b></span><span class="tx"><b>)</b></span><span class="tx"><b>;</b></span><span class="iv"><b>¬</b></span></div><div class="ln" style="top:435px"><b>8</b><b>2</b></div><div class="row" style="top:435px"><span class="ig iv"><b>·</b><b>·</b><b>·</b><b>·</b></span><span class="ig iv"><b>·</b><b>·</b><b>·</b><b>·</b></span><span class="iv"><b>·</b><b>·</b><b>·</b><b>·</b></span><span class="va"><b>$</b><b>o</b><b>r</b><b>d</b><b>e</b><b>r</b><b>I</b><b>n</b><b>v</b><b>o</b><b>i</b><b>c</b><b>e</b><b>S</b><b>e</b><b>r</b><b>v</b><b>i</b><b>c</b><b>e</b><b>s</b></span><span class="kw"><b>-</b><b>&gt;</b></span><span class="tx"><b>u</b><b>p</b><b>d</b><b>a</b><b>t</b><b>e</b></span><span class="tx"><b>(</b></span><span class="tx"><b>[</b></span><span class="st"><b>&#x27;</b><b>o</b><b>r</b><b>d</b><b>e</b><b>r</b><b>_</b><b>i</b><b>d</b><b>&#x27;</b></span><span class="iv"><b>·</b></span><span class="kw"><b>=</b><b>&gt;</b></span><span class="iv"><b>·</b></span><span class="va"><b>$</b><b>o</b><b>r</b><b>d</b><b>e</b><b>r</b><b>I</b><b>n</b><b>f</b><b>o</b></span><span class="tx"><b>[</b></span><span class="st"><b>&#x27;</b><b>i</b><b>d</b><b>&#x27;</b></span><span class="tx"><b>]</b></span><span class="tx"><b>]</b></span><span class="tx"><b>,</b></span><span class="iv"><b>·</b></span><span class="tx"><b>[</b></span><span class="st"><b>&#x27;</b><b>i</b><b>s</b><b>_</b><b>p</b><b>a</b><b>y</b><b>&#x27;</b></span><span class="iv"><b>·</b></span><span class="kw"><b>=</b><b>&gt;</b></span><span class="iv"><b>·</b></span><span class="nu"><b>1</b></span><span class="tx"><b>]</b></span><span class="tx"><b>)</b></span><span class="tx"><b>;</b></span><span class="iv"><b>¬</b></span></div><div class="ln" style="top:452px"><b>8</b><b>3</b></div><div class="row" style="top:452px"><span class="ig iv"><b>·</b><b>·</b><b>·</b><b>·</b></span><span class="ig iv"><b>·</b><b>·</b><b>·</b><b>·</b></span><span class="iv"><b>·</b><b>·</b><b>·</b><b>·</b></span><span class="cm"><b>/</b><b>/</b></span><span class="cj cjt cm" style="width:200.53px">支付成功后计算商品节省金额</span><span class="iv"><b>¬</b></span></div><div class="ln" style="top:469px"><b>8</b><b>4</b></div><div class="row" style="top:469px"><span class="ig iv"><b>·</b><b>·</b><b>·</b><b>·</b></span><span class="ig iv"><b>·</b><b>·</b><b>·</b><b>·</b></span><span class="iv"><b>·</b><b>·</b><b>·</b><b>·</b></span><span class="cl it"><b>O</b><b>r</b><b>d</b><b>e</b><b>r</b><b>J</b><b>o</b><b>b</b></span><span class="kw"><b>:</b><b>:</b></span><span class="tx"><b>d</b><b>i</b><b>s</b><b>p</b><b>a</b><b>t</b><b>c</b><b>h</b><b>D</b><b>o</b></span><span class="tx"><b>(</b></span><span class="st"><b>&#x27;</b><b>s</b><b>e</b><b>t</b><b>E</b><b>c</b><b>o</b><b>n</b><b>o</b><b>m</b><b>i</b><b>z</b><b>e</b><b>M</b><b>o</b><b>n</b><b>e</b><b>y</b><b>&#x27;</b></span><span class="tx"><b>,</b></span><span class="iv"><b>·</b></span><span class="tx"><b>[</b></span><span class="va"><b>$</b><b>o</b><b>r</b><b>d</b><b>e</b><b>r</b><b>I</b><b>n</b><b>f</b><b>o</b></span><span class="tx"><b>]</b></span><span class="tx"><b>)</b></span><span class="tx"><b>;</b></span><span class="iv"><b>¬</b></span></div><div class="ln" style="top:486px"><b>8</b><b>5</b></div><div class="row" style="top:486px"><span class="ig iv"><b>·</b><b>·</b><b>·</b><b>·</b></span><span class="ig iv"><b>·</b><b>·</b><b>·</b><b>·</b></span><span class="iv"><b>·</b><b>·</b><b>·</b><b>·</b></span><span class="cm"><b>/</b><b>/</b></span><span class="cj cjt cm" style="width:262.23px">支付成功处理自己、上级分销等级升级</span><span class="iv"><b>¬</b></span></div><div class="ln" style="top:503px"><b>8</b><b>6</b></div><div class="row" style="top:503px"><span class="ig iv"><b>·</b><b>·</b><b>·</b><b>·</b></span><span class="ig iv"><b>·</b><b>·</b><b>·</b><b>·</b></span><span class="iv"><b>·</b><b>·</b><b>·</b><b>·</b></span><span class="cl it"><b>A</b><b>g</b><b>e</b><b>n</b><b>t</b><b>J</b><b>o</b><b>b</b></span><span class="kw"><b>:</b><b>:</b></span><span class="tx"><b>d</b><b>i</b><b>s</b><b>p</b><b>a</b><b>t</b><b>c</b><b>h</b></span><span class="tx"><b>(</b></span><span class="tx"><b>[</b></span><span class="tx"><b>(</b></span><span class="tx"><b>i</b><b>n</b><b>t</b></span><span class="tx"><b>)</b></span><span class="va"><b>$</b><b>o</b><b>r</b><b>d</b><b>e</b><b>r</b><b>I</b><b>n</b><b>f</b><b>o</b></span><span class="tx"><b>[</b></span><span class="st"><b>&#x27;</b><b>u</b><b>i</b><b>d</b><b>&#x27;</b></span><span class="tx"><b>]</b></span><span class="tx"><b>]</b></span><span class="tx"><b>)</b></span><span class="tx"><b>;</b></span><span class="iv"><b>¬</b></span></div><div class="ln" style="top:520px"><b>8</b><b>7</b></div><div class="row" style="top:520px"><span class="ig iv"><b>·</b><b>·</b><b>·</b><b>·</b></span><span class="ig iv"><b>·</b><b>·</b><b>·</b><b>·</b></span><span class="iv"><b>·</b><b>·</b><b>·</b><b>·</b></span><span class="cm"><b>/</b><b>/</b></span><span class="cj cjt cm" style="width:231.38px">支付成功后更新用户支付订单数量</span><span class="iv"><b>¬</b></span></div><div class="ln" style="top:537px"><b>8</b><b>8</b></div><div class="row" style="top:537px"><span class="ig iv"><b>·</b><b>·</b><b>·</b><b>·</b></span><span class="ig iv"><b>·</b><b>·</b><b>·</b><b>·</b></span><span class="iv"><b>·</b><b>·</b><b>·</b><b>·</b></span><span class="cl it"><b>O</b><b>r</b><b>d</b><b>e</b><b>r</b><b>J</b><b>o</b><b>b</b></span><span class="kw"><b>:</b><b>:</b></span><span class="tx"><b>d</b><b>i</b><b>s</b><b>p</b><b>a</b><b>t</b><b>c</b><b>h</b><b>D</b><b>o</b></span><span class="tx"><b>(</b></span><span class="st"><b>&#x27;</b><b>s</b><b>e</b><b>t</b><b>U</b><b>s</b><b>e</b><b>r</b><b>P</b><b>a</b><b>y</b><b>C</b><b>o</b><b>u</b><b>n</b><b>t</b><b>A</b><b>n</b><b>d</b><b>P</b><b>r</b><b>o</b><b>m</b><b>o</b><b>t</b><b>e</b><b>r</b><b>&#x27;</b></span><span class="tx"><b>,</b></span><span class="iv"><b>·</b></span><span class="tx"><b>[</b></span><span class="va"><b>$</b><b>o</b><b>r</b><b>d</b><b>e</b><b>r</b><b>I</b><b>n</b><b>f</b><b>o</b></span><span class="tx"><b>]</b></span><span class="tx"><b>)</b></span><span class="tx"><b>;</b></span><span class="iv"><b>¬</b></span></div><div class="ln" style="top:554px"><b>8</b><b>9</b></div><div class="row" style="top:554px"><span class="ig iv"><b>·</b><b>·</b><b>·</b><b>·</b></span><span class="ig iv"><b>·</b><b>·</b><b>·</b><b>·</b></span><span class="iv"><b>·</b><b>·</b><b>·</b><b>·</b></span><span class="cm"><b>/</b><b>/</b></span><span class="cj cjt cm" style="width:138.82px">优惠活动赠送优惠卷</span><span class="iv"><b>¬</b></span></div><div class="ln" style="top:571px"><b>9</b><b>0</b></div><div class="row" style="top:571px"><span class="ig iv"><b>·</b><b>·</b><b>·</b><b>·</b></span><span class="ig iv"><b>·</b><b>·</b><b>·</b><b>·</b></span><span class="iv"><b>·</b><b>·</b><b>·</b><b>·</b></span><span class="cl it"><b>S</b><b>t</b><b>o</b><b>r</b><b>e</b><b>P</b><b>r</b><b>o</b><b>m</b><b>o</b><b>t</b><b>i</b><b>o</b><b>n</b><b>s</b><b>J</b><b>o</b><b>b</b></span><span class="kw"><b>:</b><b>:</b></span><span class="tx"><b>d</b><b>i</b><b>s</b><b>p</b><b>a</b><b>t</b><b>c</b><b>h</b><b>D</b><b>o</b></span><span class="tx"><b>(</b></span><span class="st"><b>&#x27;</b><b>g</b><b>i</b><b>v</b><b>e</b><b>&#x27;</b></span><span class="tx"><b>,</b></span><span class="iv"><b>·</b></span><span class="tx"><b>[</b></span><span class="va"><b>$</b><b>o</b><b>r</b><b>d</b><b>e</b><b>r</b><b>I</b><b>n</b><b>f</b><b>o</b></span><span class="tx"><b>]</b></span><span class="tx"><b>)</b></span><span class="tx"><b>;</b></span><span class="iv"><b>¬</b></span></div><div class="ln" style="top:588px"><b>9</b><b>1</b></div><div class="row" style="top:588px"><span class="ig iv"><b>·</b><b>·</b><b>·</b><b>·</b></span><span class="ig iv"><b>·</b><b>·</b><b>·</b><b>·</b></span><span class="iv"><b>·</b><b>·</b><b>·</b><b>·</b></span><span class="cm"><b>/</b><b>/</b></span><span class="cj cjt cm" style="width:185.10px">优惠活动关联用户标签设置</span><span class="iv"><b>¬</b></span></div><div class="ln" style="top:605px"><b>9</b><b>2</b></div><div class="row" style="top:605px"><span class="ig iv"><b>·</b><b>·</b><b>·</b><b>·</b></span><span class="ig iv"><b>·</b><b>·</b><b>·</b><b>·</b></span><span class="iv"><b>·</b><b>·</b><b>·</b><b>·</b></span><span class="cl it"><b>S</b><b>t</b><b>o</b><b>r</b><b>e</b><b>P</b><b>r</b><b>o</b><b>m</b><b>o</b><b>t</b><b>i</b><b>o</b><b>n</b><b>s</b><b>J</b><b>o</b><b>b</b></span><span class="kw"><b>:</b><b>:</b></span><span class="tx"><b>d</b><b>i</b><b>s</b><b>p</b><b>a</b><b>t</b><b>c</b><b>h</b><b>D</b><b>o</b></span><span class="tx"><b>(</b></span><span class="st"><b>&#x27;</b><b>s</b><b>e</b><b>t</b><b>U</b><b>s</b><b>e</b><b>r</b><b>L</b><b>a</b><b>b</b><b>e</b><b>l</b><b>&#x27;</b></span><span class="tx"><b>,</b></span><span class="iv"><b>·</b></span><span class="tx"><b>[</b></span><span class="va"><b>$</b><b>o</b><b>r</b><b>d</b><b>e</b><b>r</b><b>I</b><b>n</b><b>f</b><b>o</b></span><span class="tx"><b>]</b></span><span class="tx"><b>)</b></span><span class="tx"><b>;</b></span><span class="iv"><b>¬</b></span></div><div style="position:absolute;left:321.4px;top:298px;width:2px;height:17px;background:#F8F8F0"></div><div style="position:absolute;left:1147px;top:0;width:11px;height:610px;background:#353535"></div><div style="position:absolute;left:1147px;top:252px;width:11px;height:161px;background:#767676"></div></div><div id="pill"></div><svg style="position:absolute;left:0;top:326px" width="6" height="22" viewBox="0 0 6 22"><path d="M2.4 4.9L-3.4 11.2L2.4 17.5" fill="none" stroke="#fff" stroke-width="2.2"/></svg><div class="rb" style="left:710px;top:32px;width:139px;height:56px"></div><div class="rb" style="left:102px;top:358px;width:317px;height:59px"></div></body></html>
